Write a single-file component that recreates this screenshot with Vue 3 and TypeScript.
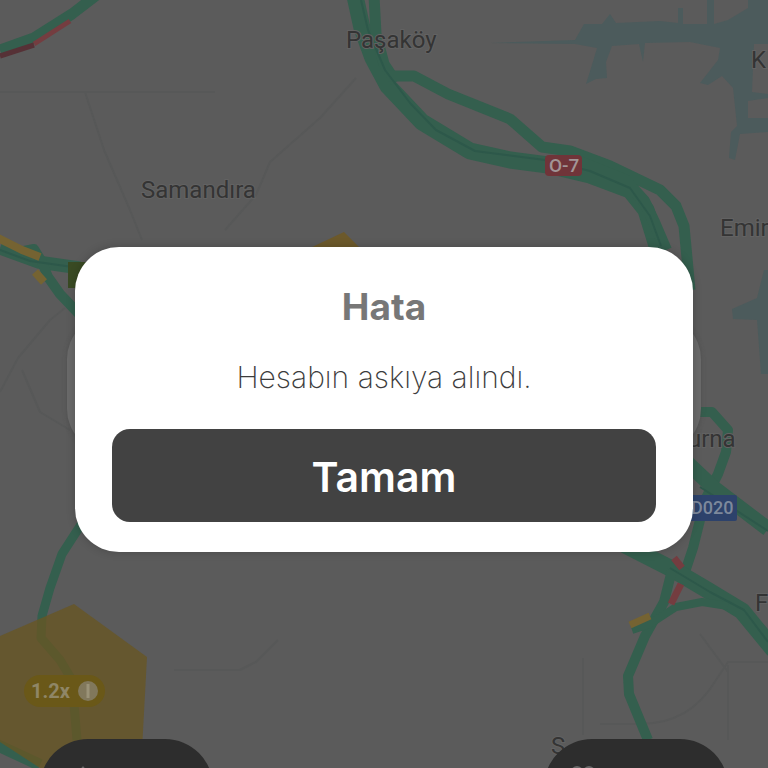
<script setup lang="ts">
import { ref } from 'vue'

interface Road {
  d: string
  width: number
  kind: 'green' | 'core' | 'amber' | 'red' | 'dark' | 'minor'
}
interface Place {
  name: string
  x: number
  y: number
}

const open = ref<boolean>(true)

const roads: Road[] = [
  { d: 'M0 92H215M85 92L104 150L130 210L142 240M356 78L320 118L270 162L256 195L225 230', width: 2, kind: 'minor' },
  { d: 'M0 392L18 358L50 320L65 308M22 370L40 412L70 430', width: 2, kind: 'minor' },
  { d: 'M174 670H240L256 662L278 640', width: 2, kind: 'minor' },
  { d: 'M583 658V735M600 724H640Q690 724 716 680L728 662H768M728 665V740M700 634L728 672', width: 2, kind: 'minor' },
  { d: 'M98 -6L72 14L34 38L0 50', width: 11, kind: 'green' },
  { d: 'M70 21L34 44', width: 5, kind: 'red' },
  { d: 'M34 45L0 56', width: 5, kind: 'dark' },
  { d: 'M355 -4L362 28L373 58L388 86L422 122L470 151L510 160L548 165L590 175L630 190L646 210L658 249', width: 17, kind: 'green' },
  { d: 'M374 -4L376 34L384 64L396 82', width: 11, kind: 'green' },
  { d: 'M388 76L414 76L448 94L510 119L542 147L570 151L610 166L660 190L676 206L684 226L690 290', width: 11, kind: 'green' },
  { d: 'M580 162L625 180L644 201L654 222L666 250', width: 12, kind: 'green' },
  { d: 'M361 0L368 30L385 70L410 103L436 130L475 151L545 160L590 171L630 188L650 216L661 246', width: 2, kind: 'core' },
  { d: 'M0 248L38 262L80 268', width: 13, kind: 'green' },
  { d: 'M24 251L34 249L42 262L48 277L60 294L80 315', width: 10, kind: 'green' },
  { d: 'M-2 238L22 250L40 257M35 272L44 282', width: 8, kind: 'amber' },
  { d: 'M0 250L30 261L80 268', width: 2, kind: 'core' },
  { d: 'M84 520L62 554L50 588L42 616L41 638L60 660L72 680L77 740', width: 9, kind: 'green' },
  { d: 'M-5 744L40 765', width: 12, kind: 'green' },
  { d: 'M688 412L712 412L728 430L726 452L718 474L705 500L693 548L684 575', width: 10, kind: 'green' },
  { d: 'M680 456L714 488L768 529', width: 15, kind: 'green' },
  { d: 'M625 545L670 568L704 588L742 611L774 650', width: 17, kind: 'green' },
  { d: 'M672 570L664 602L645 636L628 676L629 694L648 740', width: 10, kind: 'green' },
  { d: 'M632 630L650 624L676 607L702 602L728 606', width: 8, kind: 'green' },
  { d: 'M670 568L710 592L744 610L768 642M700 487L768 531', width: 2, kind: 'core' },
  { d: 'M674 558L682 568M681 584L671 604', width: 7, kind: 'red' },
  { d: 'M630 625L650 616', width: 7, kind: 'amber' },
]

const places: Place[] = [
  { name: 'Paşaköy', x: 346, y: 48 },
  { name: 'Samandıra', x: 141, y: 198 },
  { name: 'K', x: 751, y: 68 },
  { name: 'Emir', x: 720, y: 236 },
  { name: 'urna', x: 688, y: 447 },
  { name: 'F', x: 755, y: 611 },
  { name: 'S', x: 551, y: 754 },
]
</script>

<template>
  <main class="screen">
    <svg class="map" viewBox="0 0 768 768" preserveAspectRatio="xMidYMid slice" aria-hidden="true">
      <g class="water">
        <path d="M490 43L575 40L584 24L602 24L610 14L616 23L660 21L678 23V8H683V24L707 24V0H714V24L728 20L748 8V-4H768V44H754L752 92L768 94V98L748 101V118H768V132L740 134L735 160L729 158L731 132L737 126L733 88L722 76L708 85L700 83L718 60L720 48L690 42L645 43L643 62L639 44L612 46L606 62L607 78L596 79L586 84L591 68L597 48L575 44Z" />
        <path d="M732 309L757 298L764 270H768V374H761L757 320L733 319Z" />
      </g>
      <path v-for="road in roads" :key="road.d" :d="road.d" :stroke-width="road.width" :class="['road', road.kind]" />
      <path class="zone" d="M74 604L147 657L141 768H40L0 742V636Z" />
      <path class="zone bright" d="M310 248L344 232L362 250Z" />
      <rect x="68" y="262" width="24" height="26" fill="#394a23" />
      <rect x="545" y="155" width="37" height="21" rx="4" fill="#703439" />
      <text class="shield" x="549" y="172">O-7</text>
      <rect x="680" y="495" width="57" height="26" rx="2" fill="#2d426b" />
      <text class="shield blue" x="691" y="514">D020</text>
      <text v-for="place in places" :key="place.name" class="place" :x="place.x" :y="place.y">{{ place.name }}</text>
      <rect x="24" y="675" width="81" height="32" rx="16" fill="#6a5818" />
      <text class="boost" x="31" y="698">1.2x</text>
      <circle cx="88" cy="691" r="10" fill="#81785c" />
      <path d="M88 684V698" stroke="#9b9378" stroke-width="3" />
    </svg>

    <div class="under-card"></div>

    <div class="dock">
      <span class="pill">
        <svg class="pill-icon" viewBox="0 0 32 32" aria-hidden="true"><path d="M15 3L20 9V17H10V9Z" /></svg>
      </span>
      <span class="pill wide">
        <svg class="pill-icon" viewBox="0 0 32 32" aria-hidden="true"><circle cx="5" cy="9" r="6" /><circle cx="17" cy="9" r="6" /></svg>
      </span>
    </div>

    <section v-if="open" class="dialog" role="alertdialog" aria-modal="true" aria-labelledby="title" aria-describedby="message">
      <h1 id="title">Hata</h1>
      <p id="message">Hesabın askıya alındı.</p>
      <button type="button" @click="open = false">Tamam</button>
    </section>
  </main>
</template>

<style>
body {
  margin: 0;
  background: #5b5b5b;
}
</style>

<style scoped>
.screen {
  position: relative;
  display: grid;
  align-items: center;
  box-sizing: border-box;
  min-height: 100vh;
  padding-top: 31px;
  overflow: hidden;
  background: #5b5b5b;
  font-family: Inter, "Noto Sans", sans-serif;
}
.map {
  position: absolute;
  inset: 0;
  width: 100%;
  height: 100%;
  font-family: Roboto, sans-serif;
}
.water { fill: #4c5b5c; }
.road {
  fill: none;
  stroke-linejoin: round;
}
.green { stroke: #345f4e; }
.core { stroke: #2d584a; }
.amber { stroke: #756332; }
.red { stroke: #743d40; }
.dark { stroke: #563136; }
.minor { stroke: #575858; }
.zone {
  fill: #685622;
  fill-opacity: 0.78;
}
.zone.bright { fill: #71591d; }
.place {
  fill: #343434;
  stroke: #626262;
  stroke-width: 2px;
  paint-order: stroke;
  font-size: 24px;
}
.shield {
  fill: #a29596;
  font-size: 19px;
  font-weight: 500;
}
.shield.blue {
  fill: #7d899c;
  font-size: 18px;
}
.boost {
  fill: #8f8666;
  font-size: 20px;
  font-weight: 700;
}
.under-card,
.dialog {
  position: relative;
  grid-area: 1 / 1;
}
.under-card {
  height: 138px;
  margin: 0 67px 32px;
  border-radius: 44px;
  background: #6a6a6a;
  box-shadow: 0 1px 5px #4446;
}
.dock {
  position: absolute;
  inset: auto 40px 0;
  display: flex;
  justify-content: space-between;
  height: 29px;
}
.pill {
  box-sizing: border-box;
  width: 173px;
  height: 96px;
  padding: 24px 28px;
  border-radius: 48px;
  background: #2d2d2d;
}
.pill.wide { width: 184px; }
.pill-icon {
  display: block;
  width: 32px;
  height: 32px;
  fill: #686868;
}
.dialog {
  display: flex;
  flex-direction: column;
  margin: 0 75px;
  padding: 36px 37px 30px;
  border-radius: 44px;
  background: #fff;
  box-shadow: 0 0 10px #0003;
  text-align: center;
}
h1 {
  margin: 0;
  color: #777;
  font-size: 37px;
  line-height: 48px;
  font-weight: 700;
}
p {
  margin: 26px 0 32px;
  color: #3c3c3c;
  font-size: 30px;
  line-height: 40px;
  font-weight: 200;
}
button {
  width: 100%;
  height: 93px;
  padding: 2px 0 0;
  border: 0;
  border-radius: 18px;
  background: #424242;
  color: #fff;
  font: 600 41px/48px Inter, "Noto Sans", sans-serif;
  cursor: pointer;
}
</style>
